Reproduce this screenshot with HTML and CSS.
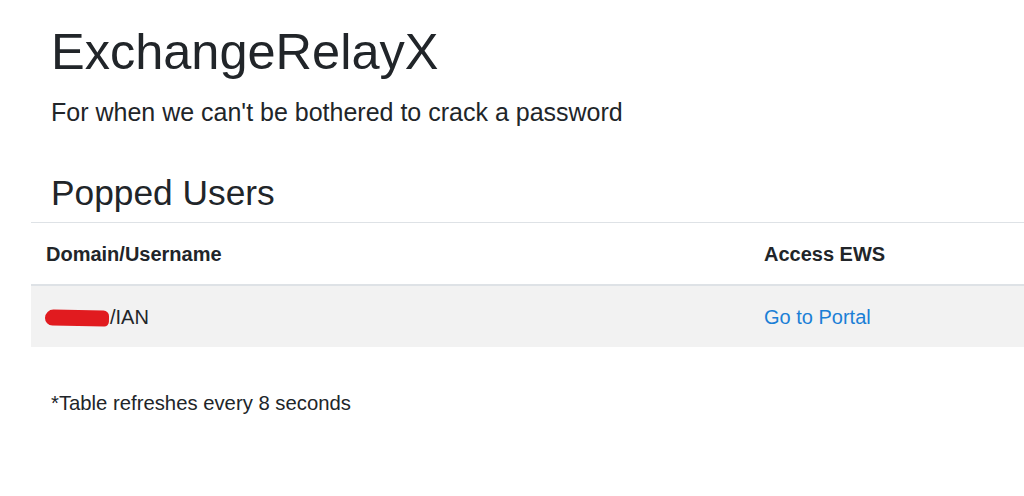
FILE: index.html
```html
<!DOCTYPE html>
<html lang="en">
<head>
<meta charset="utf-8">
<title>ExchangeRelayX</title>
<link rel="stylesheet" href="styles.css">
</head>
<body>
<div class="page">
  <header class="intro">
    <h1 class="title">ExchangeRelayX</h1>
    <p class="lead">For when we can't be bothered to crack a password</p>
    <h3 class="section-title">Popped Users</h3>
  </header>
  <table class="users">
    <thead>
      <tr>
        <th class="col-user">Domain/Username</th>
        <th>Access EWS</th>
      </tr>
    </thead>
    <tbody>
      <tr>
        <td class="col-user"><span class="redacted"></span>/IAN</td>
        <td><a class="portal" href="#">Go to Portal</a></td>
      </tr>
    </tbody>
  </table>
  <p class="note">*Table refreshes every 8 seconds</p>
</div>
</body>
</html>
```

FILE: styles.css
```css
html, body {
  margin: 0;
  padding: 0;
  background: #ffffff;
  overflow: hidden;
}

body {
  font-family: "Liberation Sans", Arial, sans-serif;
  color: #212529;
  font-size: 20px;
  line-height: 1.5;
}

.page {
  padding-left: 31px;
}

.intro {
  padding-top: 22px;
  padding-left: 20px;
}

.title {
  margin: 0 0 11px 0;
  font-size: 50.5px;
  font-weight: 400;
  line-height: 1.2;
}

.lead {
  margin: 0 0 41px 0;
  font-size: 25px;
  font-weight: 300;
  line-height: 1.5;
}

.section-title {
  margin: 0 0 8px 0;
  font-size: 35.3px;
  font-weight: 400;
  line-height: 1.2;
}

.users {
  width: 100%;
  border-collapse: collapse;
  margin: 0 0 41px 0;
}

.users th,
.users td {
  text-align: left;
  padding: 16px 15px 15px 15px;
  vertical-align: top;
  border-top: 1px solid #dee2e6;
  line-height: 30px;
  font-size: 20px;
}

.users th {
  font-weight: 700;
}

.users thead th {
  border-bottom: 2px solid #dee2e6;
}

.users tbody tr {
  background: #f2f2f2;
}

.users .col-user {
  width: 688px;
}

.user-name {
  letter-spacing: 0.3px;
}

.redacted {
  display: inline-block;
  width: 64px;
  height: 16px;
  margin-left: -1px;
  margin-right: 1px;
  vertical-align: -2px;
  background: #e11b1f;
  border-radius: 9px 6px 5px 8px;
  transform: rotate(1deg);
}

.portal {
  color: #1b7fd6;
  text-decoration: none;
}

.note {
  margin: 0;
  padding-left: 20px;
  font-size: 20.3px;
  line-height: 30px;
}
```
